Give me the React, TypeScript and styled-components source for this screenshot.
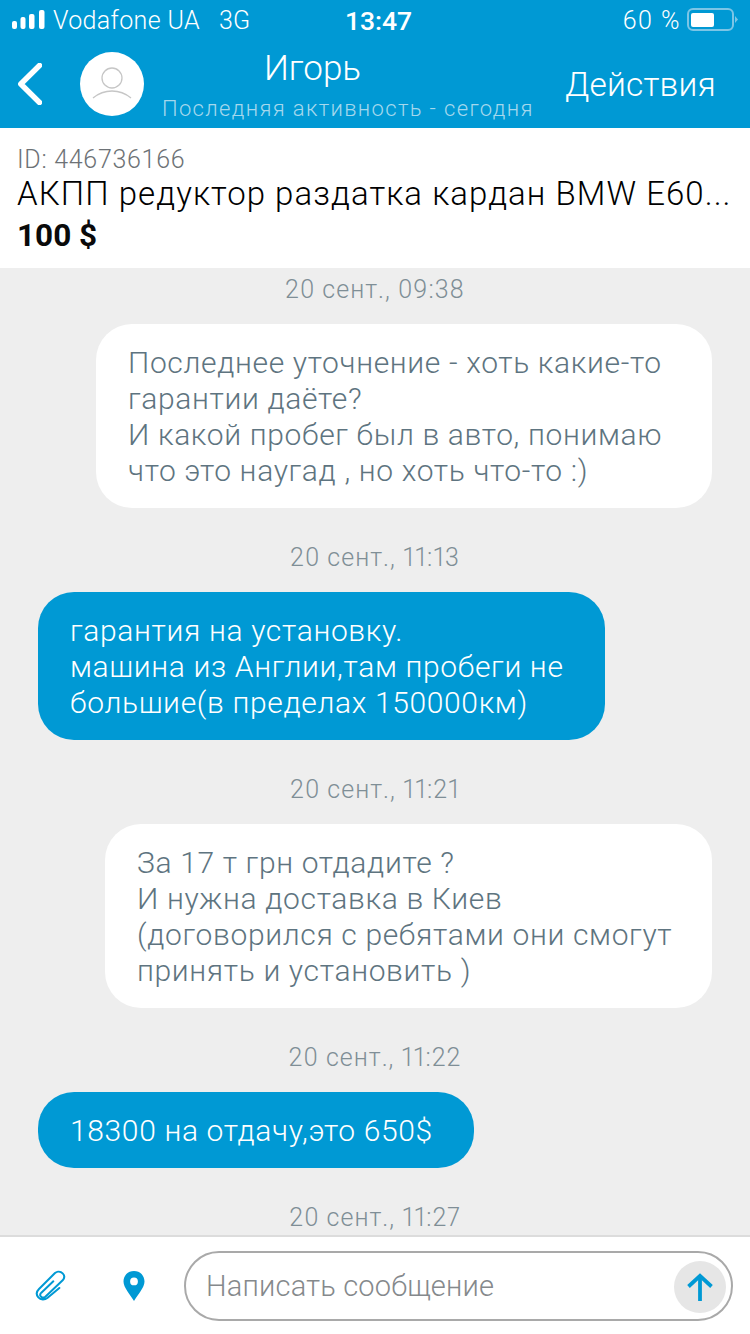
import React from 'react';
import styled, { createGlobalStyle } from 'styled-components';

const GlobalStyle = createGlobalStyle`
  html, body {
    margin: 0;
    padding: 0;
    background: #fff;
  }
  * {
    box-sizing: border-box;
  }
`;

const Screen = styled.div`
  width: 750px;
  height: 1334px;
  display: flex;
  flex-direction: column;
  overflow: hidden;
  font-family: Roboto, "Liberation Sans", sans-serif;
  font-weight: 300;
`;

const Header = styled.header`
  background: #0099d4;
  color: #fff;
  height: 128px;
  flex: none;
`;

const StatusBar = styled.div`
  height: 40px;
  padding: 0 11px 0 12px;
  display: grid;
  grid-template-columns: 1fr auto 1fr;
  align-items: center;
  font-size: 25px;
  letter-spacing: 0.35px;
`;

const StatusLeft = styled.div`
  display: flex;
  align-items: center;
  gap: 8px;
`;

const Carrier = styled.span`
  margin-right: 11px;
`;

const Clock = styled.span`
  font-weight: 500;
  font-size: 26.5px;
  letter-spacing: 0;
  margin-left: 6px;
`;

const StatusRight = styled.div`
  display: flex;
  align-items: center;
  justify-content: flex-end;
  gap: 6px;
  letter-spacing: 1.5px;
`;

const NavBar = styled.div`
  height: 88px;
  display: flex;
  align-items: center;
  padding: 0 34px 0 18px;
`;

const Avatar = styled.div`
  width: 64px;
  height: 64px;
  border-radius: 50%;
  background: #fff;
  margin-left: 38px;
  flex: none;
  display: flex;
`;

const NavCenter = styled.div`
  margin-left: 18px;
  display: flex;
  flex-direction: column;
  align-items: flex-start;
`;

const NavName = styled.div`
  font-size: 35px;
  line-height: 40px;
  margin-left: 102px;
  margin-top: 4px;
`;

const NavStatus = styled.div`
  font-size: 22px;
  line-height: 30px;
  margin-top: 5px;
  letter-spacing: 1.35px;
  color: #a5d8ed;
  white-space: nowrap;
`;

const NavAction = styled.div`
  margin-left: auto;
  font-size: 33.5px;
  letter-spacing: 0.2px;
`;

const ProductCard = styled.section`
  height: 140px;
  flex: none;
  background: #fff;
  padding: 18px 17px 0;
`;

const ProductId = styled.div`
  font-size: 25px;
  line-height: 28px;
  letter-spacing: 0.7px;
  color: #6d7276;
`;

const ProductTitle = styled.div`
  font-size: 33px;
  line-height: 42px;
  letter-spacing: 1.05px;
  margin-top: -1px;
  color: #000;
  white-space: nowrap;
`;

const ProductPrice = styled.div`
  font-size: 31.5px;
  line-height: 36px;
  margin-top: 3px;
  font-weight: 700;
  color: #0a0a0a;
`;

const Chat = styled.main`
  flex: 1;
  min-height: 0;
  overflow: hidden;
  background: #eeeeee;
  padding: 8px 38px 0;
  display: flex;
  flex-direction: column;
`;

const Stamp = styled.div`
  font-size: 25px;
  line-height: 28px;
  letter-spacing: 1px;
  font-variant-numeric: proportional-nums;
  text-align: center;
  color: #7f8e96;
  margin-bottom: 20px;
`;

const Bubble = styled.div<{ $mine?: boolean; $width: number }>`
  width: ${(p) => p.$width}px;
  align-self: ${(p) => (p.$mine ? 'flex-end' : 'flex-start')};
  background: ${(p) => (p.$mine ? '#fff' : '#0099d4')};
  color: ${(p) => (p.$mine ? '#5e7480' : '#fff')};
  border-radius: 36px;
  padding: 21px 0 19px 32px;
  font-size: 30px;
  line-height: 36px;
  letter-spacing: 0.65px;
  margin-bottom: 36px;
  white-space: pre-line;
`;

const Composer = styled.footer`
  height: 99px;
  flex: none;
  background: #fff;
  border-top: 2px solid #dcdcdc;
  display: flex;
  align-items: center;
  padding: 0 17px 0 34px;
`;

const ComposerIcon = styled.div<{ $gap: number }>`
  display: flex;
  margin-right: ${(p) => p.$gap}px;
`;

const InputPill = styled.div`
  flex: 1;
  height: 70px;
  border: 2px solid #a9a9a9;
  border-radius: 35px;
  display: flex;
  align-items: center;
  justify-content: space-between;
  padding: 0 5px 0 20px;
  font-size: 29px;
  letter-spacing: 0.2px;
  color: #85898c;
`;

const SendButton = styled.div`
  width: 52px;
  height: 52px;
  margin-top: 2px;
  border-radius: 50%;
  background: #e6e6e6;
  display: flex;
  align-items: center;
  justify-content: center;
`;

type Message = { time: string; text: string; mine: boolean; width: number };

const messages: Message[] = [
  {
    time: '20 сент., 09:38',
    text: 'Последнее уточнение - хоть какие-то\nгарантии даёте?\nИ какой пробег был в авто, понимаю\nчто это наугад , но хоть что-то :)',
    mine: true,
    width: 616,
  },
  {
    time: '20 сент., 11:13',
    text: 'гарантия на установку.\nмашина из Англии,там пробеги не\nбольшие(в пределах 150000км)',
    mine: false,
    width: 567,
  },
  {
    time: '20 сент., 11:21',
    text: 'За 17 т грн отдадите ?\nИ нужна доставка в Киев\n(договорился с ребятами они смогут\nпринять и установить )',
    mine: true,
    width: 607,
  },
  {
    time: '20 сент., 11:22',
    text: '18300 на отдачу,это 650$',
    mine: false,
    width: 436,
  },
];

const SignalIcon = () => (
  <svg width="33" height="20" viewBox="0 0 33 20" fill="#fff">
    <rect x="0" y="11" width="5" height="8" rx="2" />
    <rect x="8.500" y="7" width="5" height="12" rx="2" />
    <rect x="17" y="4" width="5.500" height="15" rx="2" />
    <rect x="27" y="0" width="5.500" height="19" rx="2" />
  </svg>
);

const BatteryIcon = () => (
  <svg width="52" height="24" viewBox="0 0 52 24">
    <rect x="1" y="1" width="45" height="21" rx="5" fill="none" stroke="#7cc5e6" strokeWidth="2" />
    <rect x="4" y="5" width="23" height="14" rx="2" fill="#fff" />
    <path d="M48 8l3 3.500-3 3.500z" fill="#7cc5e6" />
  </svg>
);

const BackIcon = () => (
  <svg width="24" height="42" viewBox="0 0 24 42" fill="none">
    <path d="M21.500 2.500 2.800 21l18.700 18.500" stroke="#fff" strokeWidth="5.400" strokeLinecap="round" strokeLinejoin="round" />
  </svg>
);

const UserIcon = () => (
  <svg width="64" height="64" viewBox="0 0 64 64" fill="none" stroke="#c6c6c6" strokeWidth="1.300">
    <circle cx="32" cy="26" r="10" />
    <path d="M13 46c6-5 12-7 19-7s13 2 19 7" />
  </svg>
);

const ClipIcon = () => (
  <svg width="33" height="35" viewBox="40 40 99 105" fill="none" stroke="#0099d4" strokeWidth="6" strokeLinecap="round" strokeLinejoin="round">
    <path d="M116 100 80 130c-8 6-20 6-27-2s-5-18 2-25l48-48c7-6 17-5 23 1s6 14 0 21l-52 49c-5 4-10 3-13 0s-3-8 1-12l36-34" />
  </svg>
);

const PinIcon = () => (
  <svg width="22" height="30" viewBox="0 0 22 30">
    <path
      fillRule="evenodd"
      d="M11 0C4.700 0 .5 4.700.5 10.500.5 16.500 7 23.500 11 30c4-6.500 10.500-13.500 10.500-19.500C21.500 4.700 17.300 0 11 0zm0 6.500a3.900 3.900 0 1 1 0 7.800 3.900 3.900 0 0 1 0-7.800z"
      fill="#0099d4"
    />
  </svg>
);

const ArrowIcon = () => (
  <svg width="26" height="28" viewBox="0 0 26 28" fill="none" stroke="#0099d4" strokeWidth="3.800">
    <path d="M13 28V3" />
    <path d="M1.500 13.500 13 2.800l11.500 10.700" />
  </svg>
);

const App: React.FC = () => (
  <Screen>
    <GlobalStyle />
    <Header>
      <StatusBar>
        <StatusLeft>
          <SignalIcon />
          <Carrier>Vodafone UA</Carrier>
          <span>3G</span>
        </StatusLeft>
        <Clock>13:47</Clock>
        <StatusRight>
          <span>60 %</span>
          <BatteryIcon />
        </StatusRight>
      </StatusBar>
      <NavBar>
        <BackIcon />
        <Avatar>
          <UserIcon />
        </Avatar>
        <NavCenter>
          <NavName>Игорь</NavName>
          <NavStatus>Последняя активность - сегодня</NavStatus>
        </NavCenter>
        <NavAction>Действия</NavAction>
      </NavBar>
    </Header>
    <ProductCard>
      <ProductId>ID: 446736166</ProductId>
      <ProductTitle>АКПП редуктор раздатка кардан BMW E60...</ProductTitle>
      <ProductPrice>100 $</ProductPrice>
    </ProductCard>
    <Chat>
      {messages.map((m) => (
        <React.Fragment key={m.time}>
          <Stamp>{m.time}</Stamp>
          <Bubble $mine={m.mine} $width={m.width}>
            {m.text}
          </Bubble>
        </React.Fragment>
      ))}
      <Stamp>20 сент., 11:27</Stamp>
    </Chat>
    <Composer>
      <ComposerIcon $gap={56}>
        <ClipIcon />
      </ComposerIcon>
      <ComposerIcon $gap={39}>
        <PinIcon />
      </ComposerIcon>
      <InputPill>
        Написать сообщение
        <SendButton>
          <ArrowIcon />
        </SendButton>
      </InputPill>
    </Composer>
  </Screen>
);

export default App;
